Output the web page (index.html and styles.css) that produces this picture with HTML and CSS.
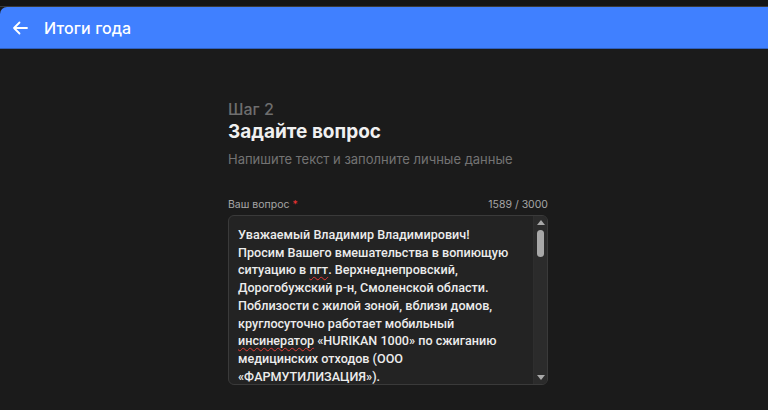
FILE: index.html
```html
<!DOCTYPE html>
<html lang="ru">
<head>
<meta charset="utf-8">
<link rel="stylesheet" href="styles.css">
</head>
<body>
<div class="topband"></div>
<header class="appbar">
  <svg class="back" width="18" height="18" viewBox="0 0 18 18"><path d="M16 9H3M8.5 3.5L3 9l5.5 5.5" fill="none" stroke="#fff" stroke-width="1.8" stroke-linecap="round" stroke-linejoin="round"/></svg>
  <span class="apptitle">Итоги года</span>
</header>
<main class="content">
  <div class="step">Шаг 2</div>
  <h1 class="title">Задайте вопрос</h1>
  <p class="subtitle">Напишите текст и заполните личные данные</p>
  <div class="labelrow">
    <span class="label">Ваш вопрос <span class="req">*</span></span>
    <span class="counter">1589 / 3000</span>
  </div>
  <div class="field">
    <div class="text">Уважаемый Владимир Владимирович!<br>Просим Вашего вмешательства в вопиющую<br>ситуацию в <span class="err">пгт</span>. Верхнеднепровский,<br>Дорогобужский р-н, Смоленской области.<br>Поблизости с жилой зоной, вблизи домов,<br>круглосуточно работает мобильный<br><span class="err">инсинератор</span> «HURIKAN 1000» по сжиганию<br>медицинских отходов (ООО<br>«ФАРМУТИЛИЗАЦИЯ»).</div>
    <div class="scrollbar">
      <div class="arrow up"></div>
      <div class="track"><div class="thumb"></div></div>
      <div class="arrow down"></div>
    </div>
  </div>
</main>
</body>
</html>
```
FILE: styles.css
```css
html, body {
  margin: 0;
  padding: 0;
  background: #1b1b1b;
  font-family: Inter, "Noto Sans", sans-serif;
  overflow: hidden;
}
.topband {
  height: 6px;
  background: #151515;
  border-bottom: 1px solid #3a3a3a;
}
.appbar {
  height: 41px;
  background: #4080ff;
  border-top-left-radius: 7px;
  display: flex;
  align-items: center;
  padding-left: 11px;
  gap: 15px;
  border-bottom: 1px solid #2f5fbf;
}
.back { display: block; }
.apptitle {
  color: #fff;
  font-size: 16px;
  font-weight: 500;
  letter-spacing: 0.1px;
}
.content {
  width: 320px;
  margin: 0 auto;
  padding-top: 50px;
  padding-left: 8px;
}
.step {
  color: #6e6e6e;
  font-size: 16px;
  line-height: 20px;
  font-weight: 500;
}
.title {
  margin: 0;
  color: #f0f0f0;
  font-size: 19px;
  line-height: 24px;
  font-weight: 700;
  padding-top: 1px;
}
.subtitle {
  margin: 7px 0 0;
  color: #737373;
  font-size: 13px;
  line-height: 16px;
}
.labelrow {
  margin-top: 31px;
  display: flex;
  justify-content: space-between;
  align-items: center;
  font-size: 10.5px;
  line-height: 14px;
  color: #a6a6a6;
}
.req { color: #e33; }
.counter { color: #a6a6a6; }
.field {
  margin-top: 3px;
  height: 170px;
  box-sizing: border-box;
  background: #232323;
  border: 1px solid #3a3a3a;
  border-radius: 6px;
  display: flex;
  overflow: hidden;
}
.text {
  flex: 1;
  padding: 10px 0 0 9px;
  color: #ececec;
  font-family: Roboto, Inter, sans-serif;
  font-size: 12.6px;
  line-height: 17.7px;
  font-weight: 500;
  white-space: nowrap;
}
.err {
  text-decoration: underline wavy #e53935;
  text-decoration-thickness: 1px;
  text-underline-offset: 2px;
}
.scrollbar {
  width: 13px;
  background: #2b2b2b;
  display: flex;
  flex-direction: column;
  align-items: center;
  border-left: 1px solid #2e2e2e;
}
.arrow {
  width: 0;
  height: 0;
  border-left: 4px solid transparent;
  border-right: 4px solid transparent;
  margin: 4px 0;
}
.arrow.up { border-bottom: 5px solid #a8a8a8; }
.arrow.down { border-top: 5px solid #a8a8a8; }
.track { flex: 1; width: 100%; display: flex; justify-content: center; }
.thumb {
  width: 7px;
  height: 27px;
  margin-top: 1px;
  border-radius: 4px;
  background: #a8a8a8;
}
```
